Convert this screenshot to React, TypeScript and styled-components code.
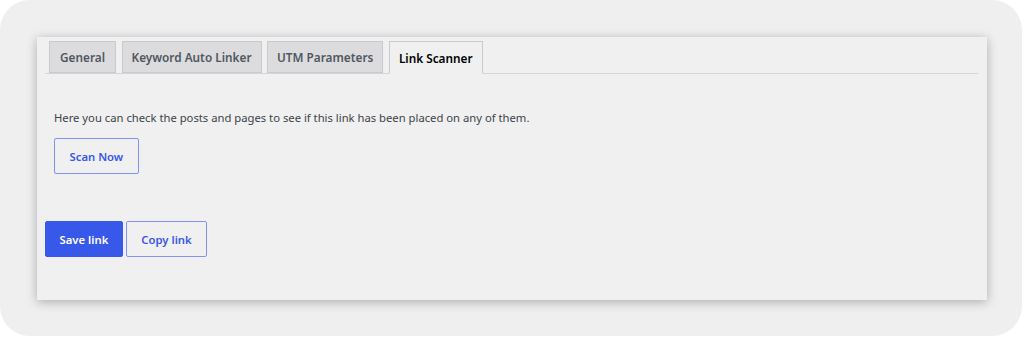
import styled, { createGlobalStyle } from 'styled-components';
import { useState } from 'react';

const GlobalStyle = createGlobalStyle`
  html, body {
    margin: 0;
    padding: 0;
    background: #ffffff;
  }
  body {
    font-family: "Noto Sans", "Open Sans", sans-serif;
    -webkit-font-smoothing: antialiased;
  }
`;

// 外側の角丸フレーム
const Frame = styled.div`
  box-sizing: border-box;
  width: 1022px;
  height: 336px;
  border-radius: 30px;
  background: #efefef;
  padding: 37px 35px 36px 37px;
`;

const Panel = styled.div`
  box-sizing: border-box;
  height: 263px;
  background: #f0f0f0;
  box-shadow: 0 2px 10px rgba(0, 0, 0, 0.28);
  padding: 4px 9px 0 8px;
  display: flex;
  flex-direction: column;
`;

const TabBar = styled.div`
  display: flex;
  gap: 5.5px;
  padding-left: 4px;
  border-bottom: 1px solid #d5d5d7;
  height: 32px;
`;

const Tab = styled.button<{ $active?: boolean }>`
  box-sizing: border-box;
  min-width: 67px;
  height: ${(p) => (p.$active ? '33px' : '32px')};
  padding: 0 9px;
  font-family: inherit;
  font-size: 11.8px;
  font-weight: 600;
  color: ${(p) => (p.$active ? '#000000' : '#50575e')};
  background: ${(p) => (p.$active ? '#f0f0f1' : '#dcdcde')};
  border: 1px solid #c9cacd;
  border-bottom: ${(p) => (p.$active ? '1px solid #f0f0f1' : '1px solid #c9cacd')};
  cursor: pointer;
`;

const TabContent = styled.div`
  padding: 35px 0 0 9px;
  display: flex;
  flex-direction: column;
  align-items: flex-start;
`;

const Description = styled.p`
  margin: 0 0 11px;
  font-size: 11.25px;
  line-height: 18px;
  color: #3c434a;
`;

const Button = styled.button<{ $primary?: boolean }>`
  box-sizing: border-box;
  height: 36px;
  padding: 0 ${(p) => (p.$primary ? '13.5px' : '14.5px')};
  border-radius: 2px;
  font-family: inherit;
  font-size: 11.3px;
  font-weight: 600;
  color: ${(p) => (p.$primary ? '#ffffff' : '#3858e9')};
  background: ${(p) => (p.$primary ? '#3858e9' : 'transparent')};
  border: 1px solid ${(p) => (p.$primary ? '#3858e9' : '#8093f1')};
  cursor: pointer;
`;

const Actions = styled.div`
  display: flex;
  gap: 3px;
  margin-top: 47px;
`;

const tabs = ['General', 'Keyword Auto Linker', 'UTM Parameters', 'Link Scanner'];

export default function App() {
  const [active, setActive] = useState('Link Scanner');

  return (
    <>
      <GlobalStyle />
      <Frame>
        <Panel>
          <TabBar>
            {tabs.map((t) => (
              <Tab key={t} $active={t === active} onClick={() => setActive(t)}>
                {t}
              </Tab>
            ))}
          </TabBar>
          <TabContent>
            <Description>
              Here you can check the posts and pages to see if this link has been placed on any of them.
            </Description>
            <Button>Scan Now</Button>
          </TabContent>
          <Actions>
            <Button $primary>Save link</Button>
            <Button>Copy link</Button>
          </Actions>
        </Panel>
      </Frame>
    </>
  );
}
